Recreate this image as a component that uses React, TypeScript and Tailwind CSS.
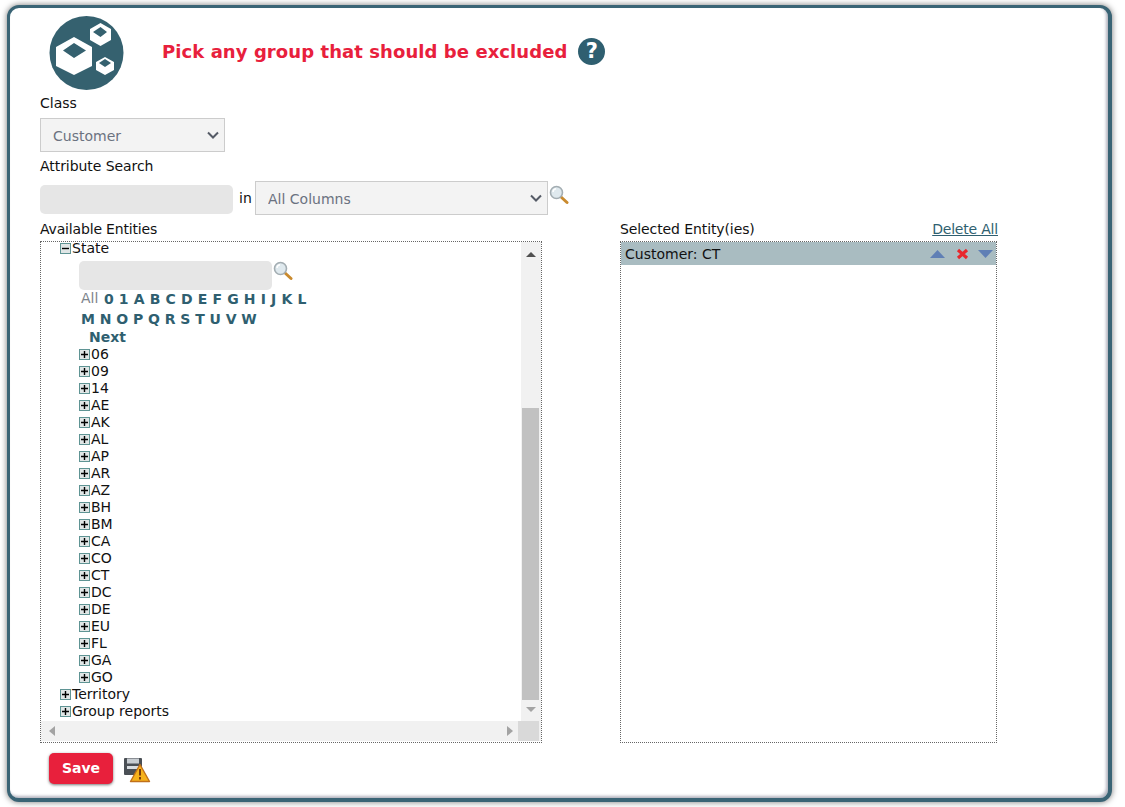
import React from "react";

const font = { fontFamily: '"DejaVu Sans", sans-serif' };

function Plus({ minus = false }: { minus?: boolean }) {
  return (
    <svg width="11" height="11" viewBox="0 0 11 11" className="shrink-0">
      <rect x="0.5" y="0.5" width="10" height="10" fill="#e0e6e6" stroke="#5f9494" />
      <path d={minus ? "M2 5.500h7" : "M2 5.500h7M5.500 2v7"} stroke="#000" strokeWidth="1.400" fill="none" />
    </svg>
  );
}

function Magnifier() {
  return (
    <svg width="20" height="20" viewBox="0 0 20 20" className="shrink-0">
      <path d="M11.500 11.500 L18 17.500" stroke="#c98a2e" strokeWidth="3" strokeLinecap="round" />
      <circle cx="7.500" cy="7.500" r="6" fill="#dfe9ee" stroke="#a3adb2" strokeWidth="1.600" />
      <path d="M4 7a3.500 3.500 0 0 1 3-3.300" stroke="#fff" strokeWidth="1.400" fill="none" />
    </svg>
  );
}

function Chevron() {
  return (
    <svg width="12" height="8" viewBox="0 0 12 8" className="absolute right-[6px] top-1/2 -translate-y-1/2 pointer-events-none">
      <path d="M1 1.500 L6 6.500 L11 1.500" stroke="#555b66" strokeWidth="2" fill="none" />
    </svg>
  );
}

function Logo() {
  return (
    <svg width="76" height="76" viewBox="49 16 76 76" className="block">
      <circle cx="86.500" cy="53" r="37" fill="#35616f" />
      <path fillRule="evenodd" fill="#fff" d="M74 37 L92 47 L92 66 L74 75 L56 66 L56 47 Z M74 43 L63 50.500 L74 58 L86 50.500 Z" />
      <path fillRule="evenodd" fill="#fff" d="M100.500 23 L111 29 L111 40 L100.500 46 L90 40 L90 29 Z M100.500 27 L93 32 L100.500 37 L107 32 Z" />
      <path fillRule="evenodd" fill="#fff" d="M105 57 L114 62 L114 70 L105 75 L96 70 L96 62 Z M105 59 L99 63 L105 67 L111 63 Z" />
    </svg>
  );
}

function SaveWarn() {
  return (
    <svg width="28" height="26" viewBox="0 0 28 26" className="block">
      <rect x="1" y="1" width="18" height="17" rx="1" fill="#4a4f55" />
      <rect x="4" y="1.500" width="12" height="5" fill="#c7ccd1" />
      <rect x="4" y="9" width="12" height="3" fill="#d8dce0" />
      <path d="M17 7.500 L26.500 24.500 L7.500 24.500 Z" fill="#f6b21b" stroke="#c0701a" strokeWidth="1.400" strokeLinejoin="round" />
      <path d="M17 12 v6.500 M17 20 v2.500" stroke="#7a3c0c" strokeWidth="2" />
    </svg>
  );
}

const row1 = ["0", "1", "A", "B", "C", "D", "E", "F", "G", "H", "I", "J", "K", "L"];
const row2 = ["M", "N", "O", "P", "Q", "R", "S", "T", "U", "V", "W"];
const states = ["06", "09", "14", "AE", "AK", "AL", "AP", "AR", "AZ", "BH", "BM", "CA", "CO", "CT", "DC", "DE", "EU", "FL", "GA", "GO"];

function TreeRow({ label, indent, minus }: { label: string; indent: string; minus?: boolean }) {
  return (
    <div className={`flex items-center h-[17px] ${indent}`}>
      <Plus minus={minus} />
      <span className="ml-px">{label}</span>
    </div>
  );
}

export default function App() {
  return (
    <div className="h-[807px] w-[1125px] overflow-hidden bg-white pt-[5px] pl-[7px] text-[14px] leading-[17px] text-[#111]" style={font}>
      <div className="relative h-[797px] w-[1105px] rounded-[12px] border-[3px] border-r-4 border-b-4 border-[#3a6475] bg-white shadow-[0_0_6px_#777777,inset_-2px_-2px_3px_#b5b5c0]">
        <div className="flex h-[76px] pl-[39px] pt-[8px] box-content">
          <Logo />
          <div className="ml-[37px] flex items-center gap-[11px] pb-[6px]">
            <span className="text-[18px] font-bold tracking-[0.075px] text-[#e8203c]">Pick any group that should be excluded</span>
            <span className="flex h-[27px] w-[27px] items-center justify-center rounded-full bg-[#2f5f70] text-[21px] font-bold text-white">?</span>
          </div>
        </div>

        <div className="pl-[30px]">
          <div className="mt-[3px] h-[17px]">Class</div>
          <div className="relative mt-[6px] h-[34px] w-[185px]">
            <select className="h-full w-full appearance-none border border-[#cccccc] bg-[#f3f3f3] pl-[12px] pt-[2px] text-[14px] text-[#6b7280]" defaultValue="Customer">
              <option>Customer</option>
            </select>
            <Chevron />
          </div>
          <div className="mt-[6px] h-[17px] tracking-[-0.06px]">Attribute Search</div>
          <div className="mt-[6px] flex h-[34px] items-center">
            <div className="mt-[2px] h-[29px] w-[193px] rounded-[5px] bg-[#e6e6e6]" />
            <span className="ml-[6px] w-[16px]">in</span>
            <div className="relative h-[34px] w-[293px]">
              <select className="h-full w-full appearance-none border border-[#cccccc] bg-[#f3f3f3] pl-[12px] pt-[2px] text-[14px] text-[#6b7280]" defaultValue="All Columns">
                <option>All Columns</option>
              </select>
              <Chevron />
            </div>
            <div className="ml-[1px] -mt-[6px]"><Magnifier /></div>
          </div>

          <div className="mt-[6px] flex items-start">
            <div className="w-[502px]">
              <div className="h-[20px] leading-[16px] tracking-[-0.17px]">Available Entities</div>
              <div className="flex h-[502px] flex-col border border-dotted border-[#666666] pb-[1px]">
                <div className="flex min-h-0 flex-1">
                  <div className="min-w-0 flex-1">
                    <div className="ml-[19px] flex h-[13px] items-center">
                      <Plus minus />
                      <span className="ml-px leading-[13px]">State</span>
                    </div>
                    <div className="ml-[38px] mt-[6px] flex items-start">
                      <div className="h-[29px] w-[193px] rounded-[5px] bg-[#e6e6e6]" />
                      <div className="ml-[1px]"><Magnifier /></div>
                    </div>
                    <div className="ml-[40px] flex h-[19px] items-center gap-[4.550px] font-bold text-[#2f5f70]">
                      <span className="mr-px -mt-[2px] font-normal text-[#7d858c]">All</span>
                      {row1.map((c) => (
                        <span key={c} className="tracking-[0.6px]">{c}</span>
                      ))}
                    </div>
                    <div className="ml-[40px] mt-[1px] flex h-[19px] items-center gap-[4.200px] font-bold text-[#2f5f70]">
                      {row2.map((c) => (
                        <span key={c} className="tracking-[0.6px]">{c}</span>
                      ))}
                    </div>
                    <div className="ml-[48px] h-[17px] font-bold text-[#2f5f70]">Next</div>
                    {states.map((s) => (
                      <TreeRow key={s} label={s} indent="ml-[38px]" />
                    ))}
                    <TreeRow label="Territory" indent="ml-[19px]" />
                    <TreeRow label="Group reports" indent="ml-[19px]" />
                  </div>
                  <div className="flex w-[20px] shrink-0 flex-col items-center bg-[#f1f1f1] pr-px">
                    <svg width="10" height="5" viewBox="0 0 10 5" className="mt-[10px]"><path d="M0 5 L5 0 L10 5 Z" fill="#505050" /></svg>
                    <div className="mt-[151px] h-[292px] w-[17px] bg-[#c1c1c1]" />
                    <svg width="10" height="5" viewBox="0 0 10 5" className="mt-[7px]"><path d="M0 0 L5 5 L10 0 Z" fill="#a3a3a3" /></svg>
                  </div>
                </div>
                <div className="flex h-[20px] shrink-0 items-center bg-[#f1f1f1]">
                  <svg width="6" height="10" viewBox="0 0 6 10" className="ml-[8px] shrink-0"><path d="M6 0 L0 5 L6 10 Z" fill="#a3a3a3" /></svg>
                  <svg width="6" height="10" viewBox="0 0 6 10" className="ml-[452px] shrink-0"><path d="M0 0 L6 5 L0 10 Z" fill="#a3a3a3" /></svg>
                  <div className="ml-[5px] h-[20px] w-[21px] shrink-0 bg-[#d9d9d9]" />
                </div>
              </div>
            </div>

            <div className="ml-[78px] w-[378px]">
              <div className="flex h-[20px] justify-between leading-[16px]">
                <span className="tracking-[-0.1px]">Selected Entity(ies)</span>
                <span className="tracking-[-0.2px] text-[#2f5f70] underline">Delete All</span>
              </div>
              <div className="h-[502px] w-[377px] border border-dotted border-[#666666]">
                <div className="flex h-[23px] items-center justify-between bg-[#a9bcc1] pl-[4px] pr-[3px]">
                  <span className="mt-[2px]">Customer: CT</span>
                  <div className="flex items-center">
                    <svg width="15" height="8" viewBox="0 0 15 8"><path d="M0 8 L7.500 0 L15 8 Z" fill="#5f7fb5" /></svg>
                    <svg width="13" height="12" viewBox="0 0 13 12" className="ml-[11px]"><path d="M2 2 L11 10 M11 2 L2 10" stroke="#e8262c" strokeWidth="3.200" /></svg>
                    <svg width="15" height="8" viewBox="0 0 15 8" className="ml-[9px]"><path d="M0 0 L7.500 8 L15 0 Z" fill="#5f7fb5" /></svg>
                  </div>
                </div>
              </div>
            </div>
          </div>

          <div className="mt-[10px] ml-[9px] flex items-center gap-[10px]">
            <button className="h-[31px] w-[64px] rounded-[5px] bg-[#e8203c] text-[14px] font-bold text-white shadow-[0_1px_3px_#777]">Save</button>
            <div className="mt-[2px]"><SaveWarn /></div>
          </div>
        </div>
      </div>
    </div>
  );
}
